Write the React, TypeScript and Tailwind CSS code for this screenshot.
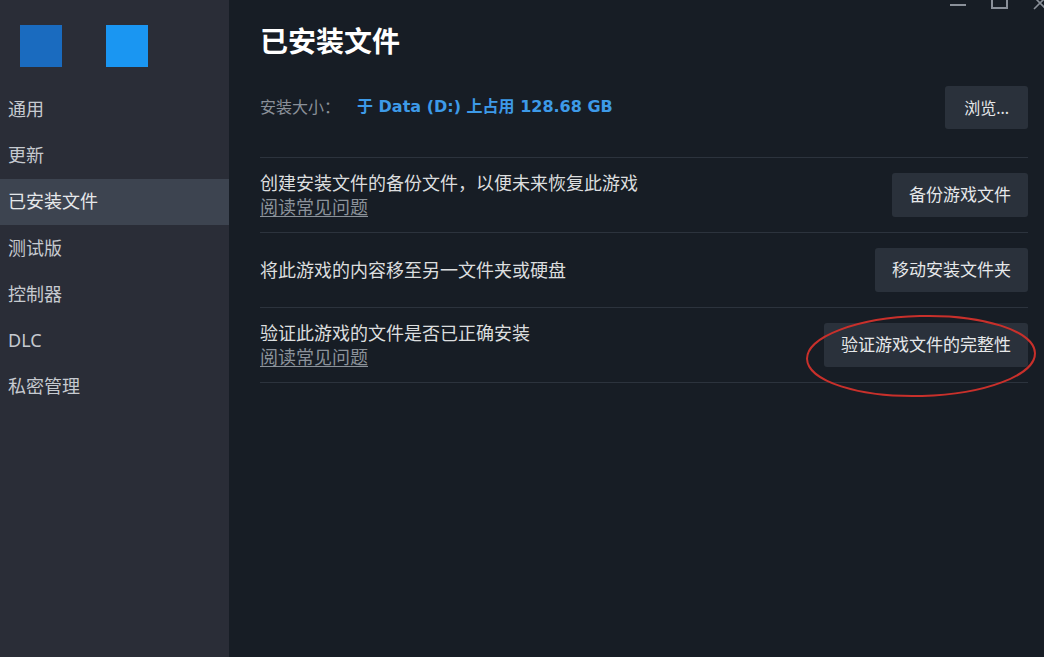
import React from "react";

const navItems = ["通用", "更新", "已安装文件", "测试版", "控制器", "DLC", "私密管理"];

type Row = { text: string; link?: boolean; button: string };

const rows: Row[] = [
  { text: "创建安装文件的备份文件，以便未来恢复此游戏", link: true, button: "备份游戏文件" },
  { text: "将此游戏的内容移至另一文件夹或硬盘", button: "移动安装文件夹" },
  { text: "验证此游戏的文件是否已正确安装", link: true, button: "验证游戏文件的完整性" },
];

export default function App() {
  return (
    <div
      className="relative flex h-[657px] w-[1044px] overflow-hidden bg-[#171d25] text-[#dcdedf]"
      style={{ fontFamily: '"Noto Sans", "Noto Sans CJK SC", sans-serif' }}
    >
      {/* sidebar */}
      <aside className="flex w-[229px] shrink-0 flex-col bg-[#2a2d37]">
        <div className="flex gap-[44px] pl-5 pt-[25px]">
          <div className="h-[42px] w-[42px] bg-[#1a6bbf]" />
          <div className="h-[42px] w-[42px] bg-[#1a96f2]" />
        </div>
        <nav className="mt-[19px] flex flex-col">
          {navItems.map((item) => (
            <div
              key={item}
              className={`flex h-[46.3px] items-center pl-2 text-[18px] ${
                item === "已安装文件" ? "bg-[#3d4450] text-[#e6e8ea]" : "text-[#c6cad0]"
              }`}
            >
              {item}
            </div>
          ))}
        </nav>
      </aside>

      {/* main */}
      <main className="flex flex-1 flex-col pl-[31px] pr-4">
        <h1 className="mt-[21px] text-[28px] font-bold leading-[40px] text-white">已安装文件</h1>

        <div className="mt-6 flex items-center justify-between border-b border-[#2c333d] pb-[28px]">
          <div className="flex items-center text-[16px]">
            <span className="text-[#8a9099]">安装大小：</span>
            <span
              className="ml-[17px] font-bold text-[#3d9ae8]"
              style={{ fontFamily: '"DejaVu Sans", "Noto Sans CJK SC", sans-serif' }}
            >
              于 Data (D:) 上占用 128.68 GB
            </span>
          </div>
          <button className="mt-[1px] h-[43px] rounded-[3px] bg-[#2a313b] px-[19px] text-[16px] text-[#e6e8ea]">
            浏览...
          </button>
        </div>

        {rows.map((r) => (
          <div
            key={r.button}
            className="flex items-center justify-between border-b border-[#2c333d] py-[15px]"
          >
            <div className="flex h-[44px] flex-col justify-center text-[18px] leading-[24px]">
              <span className="text-[#dcdedf]">{r.text}</span>
              {r.link && <span className="text-[#8b929a] underline underline-offset-2">阅读常见问题</span>}
            </div>
            <button className="h-[44px] rounded-[3px] bg-[#2a313b] px-[17px] text-[17px] text-[#e6e8ea]">
              {r.button}
            </button>
          </div>
        ))}
      </main>

      {/* window controls */}
      <div className="absolute left-[950px] top-[4px] h-[2px] w-[16px] bg-[#8a9099]" />
      <div className="absolute left-[991px] top-[-6px] h-[15px] w-[17px] border-2 border-[#8a9099]" />
      <svg className="absolute left-[1033px] top-[-4px]" width="14" height="14" viewBox="0 0 14 14">
        <path d="M1 1 L13 13 M13 1 L1 13" stroke="#8a9099" strokeWidth="1.6" />
      </svg>

      {/* red annotation ellipse */}
      <svg className="absolute left-[804px] top-[311px]" width="236" height="88" viewBox="0 0 236 88">
        <ellipse
          cx="117"
          cy="45"
          rx="114"
          ry="40"
          fill="none"
          stroke="#c8302b"
          strokeWidth="2"
          transform="rotate(-1.5 117 45)"
        />
      </svg>
    </div>
  );
}
